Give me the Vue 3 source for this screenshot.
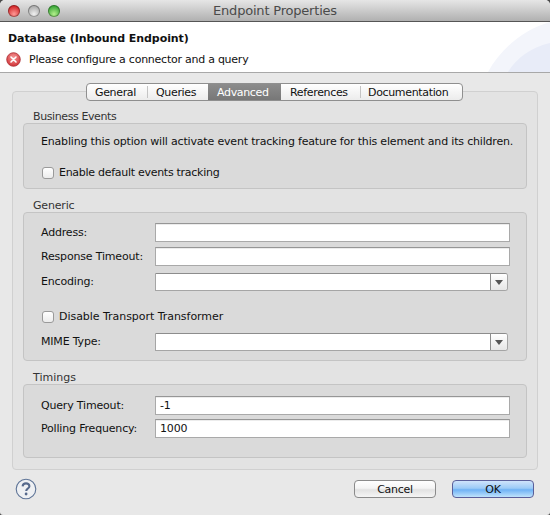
<script setup>
const tabs = ['General', 'Queries', 'Advanced', 'References', 'Documentation']
</script>

<template>
  <div class="win">
    <div class="titlebar">
      <div class="lights">
        <span class="light red"></span>
        <span class="light grey"></span>
        <span class="light green"></span>
      </div>
      <div class="wintitle">Endpoint Properties</div>
    </div>
    <div class="header">
      <svg class="swoosh" width="70" height="50" viewBox="0 0 70 50">
        <path d="M8 50C20 28 42 8 70 0V50Z" fill="#f3f5fb" />
        <path d="M28 50C36 36 52 25 70 21V50Z" fill="#e8ecf8" />
      </svg>
      <div class="htitle">Database (Inbound Endpoint)</div>
      <div class="hmsg">
        <svg width="15" height="15" viewBox="0 0 15 15">
          <defs>
            <radialGradient id="err" cx="50%" cy="35%" r="70%">
              <stop offset="0" stop-color="#f59a9a" />
              <stop offset="1" stop-color="#cf2a2f" />
            </radialGradient>
          </defs>
          <circle cx="7.5" cy="7.5" r="6.8" fill="url(#err)" stroke="#a92a30" stroke-width="0.8" />
          <path d="M5 5L10 10M10 5L5 10" stroke="#fff" stroke-width="1.6" stroke-linecap="round" />
        </svg>
        <span>Please configure a connector and a query</span>
      </div>
    </div>
    <div class="body">
      <div class="folder">
        <div class="tabs">
          <div v-for="t in tabs" :key="t" class="tab" :class="[t.toLowerCase(), { on: t === 'Advanced' }]">{{ t }}</div>
        </div>

        <div class="glabel first tight">Business Events</div>
        <section class="group be">
          <p class="desc">Enabling this option will activate event tracking feature for this element and its children.</p>
          <label class="check"><span class="box"></span>Enable default events tracking</label>
        </section>

        <div class="glabel">Generic</div>
        <section class="group generic">
          <div class="row"><span class="lab">Address:</span><div class="input"></div></div>
          <div class="row"><span class="lab">Response Timeout:</span><div class="input"></div></div>
          <div class="row short"><span class="lab">Encoding:</span>
            <div class="combo"><div class="cfield"></div><div class="cbtn"><i></i></div></div>
          </div>
          <label class="check mid"><span class="box"></span>Disable Transport Transformer</label>
          <div class="row short"><span class="lab">MIME Type:</span>
            <div class="combo"><div class="cfield"></div><div class="cbtn"><i></i></div></div>
          </div>
        </section>

        <div class="glabel wide">Timings</div>
        <section class="group timings">
          <div class="row"><span class="lab">Query Timeout:</span><div class="input">-1</div></div>
          <div class="row"><span class="lab">Polling Frequency:</span><div class="input">1000</div></div>
        </section>
      </div>

      <div class="footer">
        <svg class="help" width="22" height="22" viewBox="0 0 22 22">
          <circle cx="11" cy="11" r="9.8" fill="#eef0f3" stroke="#5d7396" stroke-width="1.1" />
          <path d="M7.6 8.4C7.8 6.4 9.2 5.4 11 5.4C13 5.4 14.4 6.5 14.4 8.2C14.4 10.4 11.3 10.6 11.2 13" fill="none" stroke="#56698c" stroke-width="2.1" />
          <circle cx="11.1" cy="16" r="1.4" fill="#56698c" />
        </svg>
        <div class="btns">
          <div class="btn">Cancel</div>
          <div class="btn ok">OK</div>
        </div>
      </div>
    </div>
  </div>
</template>

<style>
html, body { margin: 0; background: #4a4a4a; }
</style>

<style scoped>
.win {
  width: 550px;
  height: 515px;
  display: flex;
  flex-direction: column;
  overflow: hidden;
  border-radius: 5px 5px 3px 3px;
  background: #e8e8e8;
  font-family: "DejaVu Sans", sans-serif;
  font-size: 11px;
  letter-spacing: -0.18px;
  color: #111;
}
.titlebar {
  height: 21px;
  flex: none;
  display: flex;
  align-items: center;
  position: relative;
  background: linear-gradient(#e6e6e6, #b0b0b0);
  border-bottom: 1px solid #555;
}
.lights { display: flex; gap: 8px; padding-left: 8px; }
.light { width: 12px; height: 12px; border-radius: 50%; box-shadow: inset 0 0 0 1px rgba(0,0,0,.3); }
.red { background: radial-gradient(circle at 50% 75%, #ff9a96, #d42a2c 70%); }
.grey { background: radial-gradient(circle at 50% 75%, #f0f0f0, #a8a8a8 75%); }
.green { background: radial-gradient(circle at 50% 75%, #b4f08c, #3da83a 70%); }
.wintitle {
  position: absolute;
  left: 0;
  right: 0;
  text-align: center;
  font-size: 13px;
  letter-spacing: -0.2px;
  color: #4a4a4a;
}
.header {
  height: 50px;
  flex: none;
  position: relative;
  background: #fff;
  border-bottom: 1px solid #a8a8a8;
  overflow: hidden;
}
.swoosh { position: absolute; right: 0; bottom: 0; }
.htitle {
  position: relative;
  padding: 9px 0 0 8px;
  line-height: 16px;
  font-size: 11px;
  font-weight: bold;
  letter-spacing: -0.07px;
}
.hmsg {
  position: relative;
  display: flex;
  align-items: center;
  gap: 8px;
  padding: 5px 0 0 6px;
  line-height: 15px;
  letter-spacing: -0.25px;
}
.body {
  flex: 1;
  display: flex;
  flex-direction: column;
  padding: 10px 12px 0;
  min-height: 0;
}
.folder {
  position: relative;
  height: 379px;
  margin-top: 8px;
  padding: 0 10px;
  border: 1px solid #d0d0d0;
  border-radius: 4px;
  background: #e3e3e3;
  box-sizing: border-box;
  width: 526px;
}
.tabs {
  position: absolute;
  top: -9px;
  left: 73px;
  display: flex;
  height: 18px;
  background: linear-gradient(#fff, #ececec);
  border: 1px solid #8f8f8f;
  border-radius: 4px;
  overflow: hidden;
  box-sizing: border-box;
  letter-spacing: -0.34px;
}
.tab {
  flex: none;
  height: 16px;
  box-sizing: border-box;
  line-height: 17px;
  padding-left: 9px;
  position: relative;
  color: #111;
  white-space: nowrap;
}
.tab.general { width: 60px; padding-left: 8px; }
.tab.queries { width: 61px; }
.tab.advanced { width: 73px; }
.tab.references { width: 79px; }
.tab.documentation { width: 102px; padding-left: 8px; }
.tab + .tab::before {
  content: "";
  position: absolute;
  left: 0;
  top: 2px;
  bottom: 2px;
  width: 1px;
  background: #c4c4c4;
}
.tab.on {
  background: linear-gradient(#8c8c8c, #777);
  color: #fff;
}
.tab.on::before, .tab.on + .tab::before { display: none; }
.glabel {
  line-height: 12px;
  margin-top: 11px;
  padding-left: 10px;
  color: #333;
}
.glabel.first { margin-top: 19px; }
.glabel.tight { letter-spacing: -0.4px; }
.glabel.wide { letter-spacing: 0; }
.group {
  border: 1px solid #c4c4c4;
  border-radius: 4px;
  background: #dadada;
  box-sizing: border-box;
  padding: 0 16px 0 17px;
  width: 504px;
}
.be { height: 66px; padding-top: 11px; }
.desc { margin: 0; line-height: 14px; white-space: nowrap; }
.check { display: flex; align-items: center; gap: 5px; line-height: 14px; letter-spacing: -0.28px; }
.be .check { margin-top: 17px; }
.check.mid { margin: 19px 0 9px; letter-spacing: -0.04px; }
.box {
  width: 10px;
  height: 10px;
  margin-left: 1px;
  border: 1px solid #9a9a9a;
  border-radius: 3px;
  background: linear-gradient(#fff, #ececec);
}
.generic { height: 149px; padding-top: 10px; }
.timings { height: 74px; padding-top: 11px; }
.row { display: flex; align-items: center; height: 19px; }
.row + .row { margin-top: 5px; }
.timings .row + .row { margin-top: 4px; }
.row.short { height: 18px; }
.row + .row.short { margin-top: 7px; }
.lab { width: 114px; flex: none; padding-bottom: 1px; }
.input {
  width: 356px;
  height: 19px;
  box-sizing: border-box;
  background: #fff;
  border: 1px solid #a9a9a9;
  border-top-color: #969696;
  box-shadow: inset 0 1px 0 #ececec;
  padding-left: 4px;
  line-height: 17px;
  font-size: 11px;
}
.combo {
  width: 353px;
  height: 18px;
  display: flex;
  box-sizing: border-box;
  border: 1px solid #a5a5a5;
  border-top-color: #8c8c8c;
  border-radius: 0 3px 3px 0;
  background: #fff;
  overflow: hidden;
}
.cfield { flex: 1; }
.cbtn {
  width: 16px;
  border-left: 1px solid #8c8c8c;
  background: linear-gradient(#fff, #e6e6e6);
  display: flex;
  align-items: center;
  justify-content: center;
}
.cbtn i {
  width: 0;
  height: 0;
  border-left: 4px solid transparent;
  border-right: 4px solid transparent;
  border-top: 5px solid #555;
}
.footer {
  flex: 1;
  display: flex;
  align-items: flex-start;
  justify-content: space-between;
  padding-top: 8px;
}
.help { margin: 0 0 0 3px; }
.btns { display: flex; gap: 16px; padding: 2px 4px 0 0; }
.btn {
  width: 82px;
  height: 18px;
  box-sizing: border-box;
  border: 1px solid #8a8a8a;
  border-radius: 4px;
  background: linear-gradient(#fff 0, #f4f4f4 45%, #e2e2e2 55%, #f5f5f5 100%);
  text-align: center;
  line-height: 17px;
  letter-spacing: -0.28px;
}
.btn.ok {
  border-color: #5a5f9a;
  background: linear-gradient(#cfe4fb 0, #9ccbf7 45%, #6fb2f5 55%, #bfe3fc 100%);
}
</style>
